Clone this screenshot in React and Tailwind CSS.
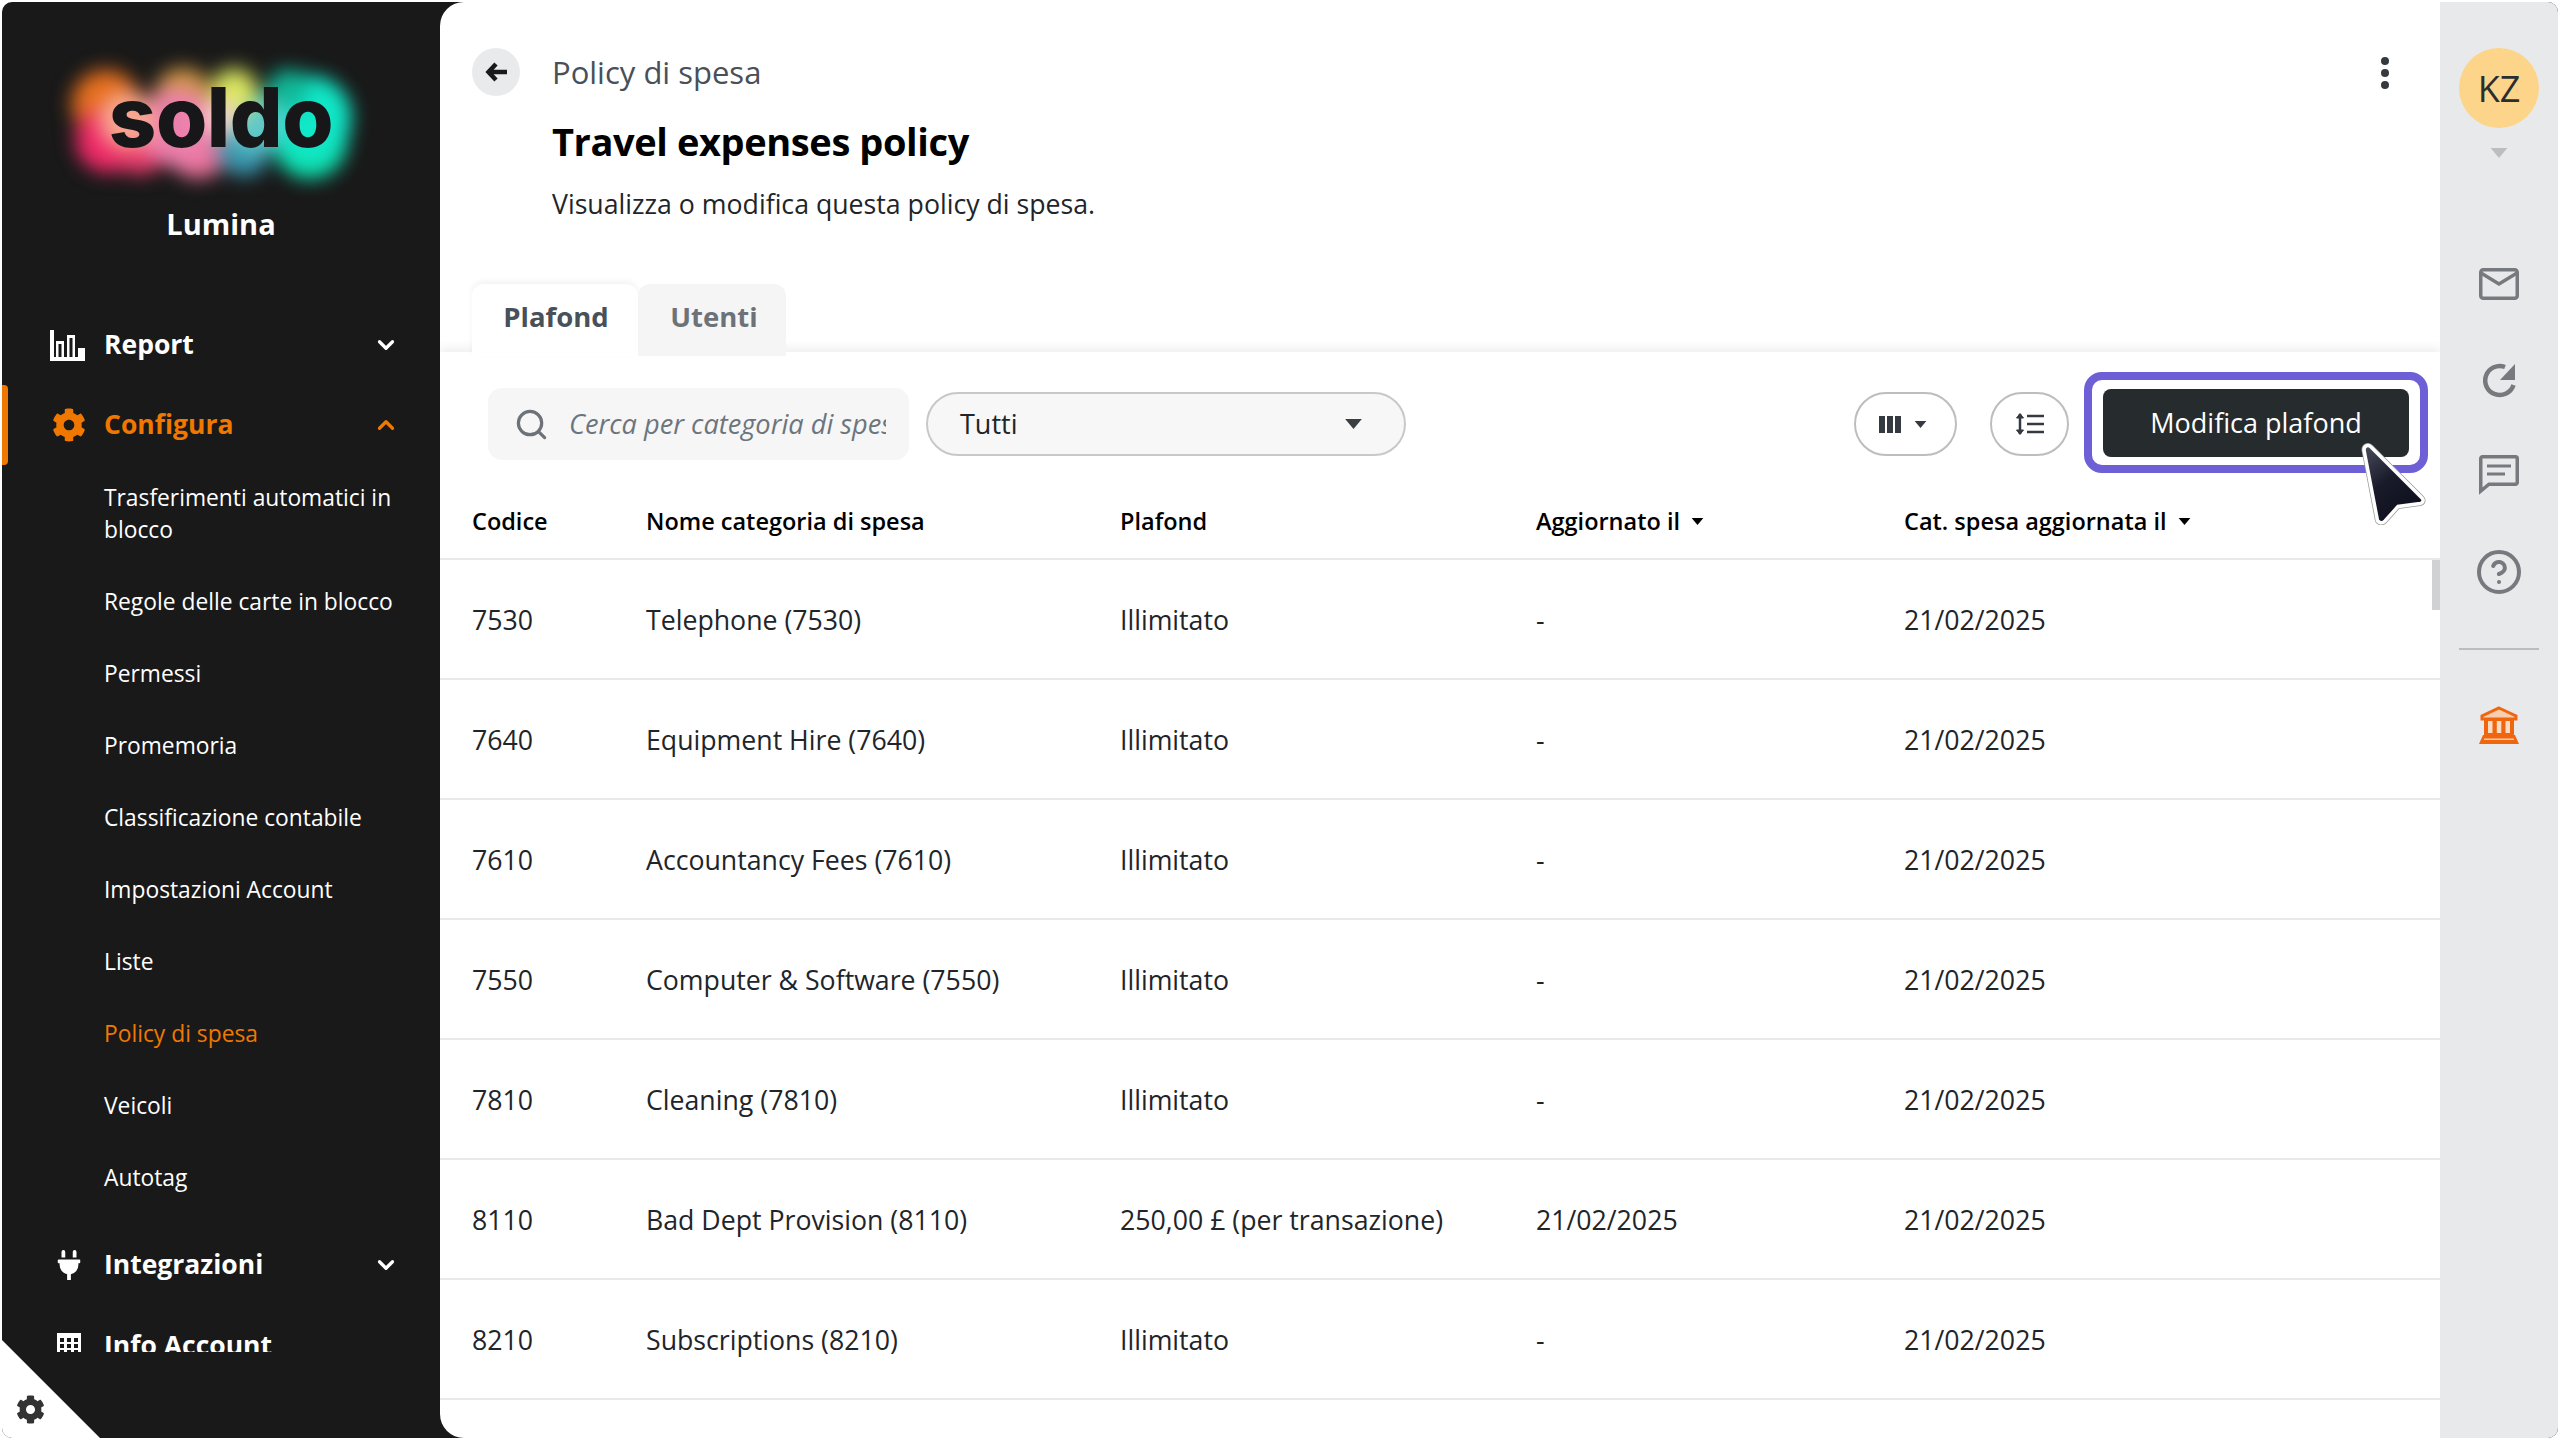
import { ChevronDown, ChevronUp, Search, CircleHelp } from 'lucide-react';
import { FaCog, FaPlug } from 'react-icons/fa';

const subItems = [
  { label: 'Trasferimenti automatici in blocco', two: true },
  { label: 'Regole delle carte in blocco' },
  { label: 'Permessi' },
  { label: 'Promemoria' },
  { label: 'Classificazione contabile' },
  { label: 'Impostazioni Account' },
  { label: 'Liste' },
  { label: 'Policy di spesa', active: true },
  { label: 'Veicoli' },
  { label: 'Autotag' },
];

const rows = [
  ['7530', 'Telephone (7530)', 'Illimitato', '-', '21/02/2025'],
  ['7640', 'Equipment Hire (7640)', 'Illimitato', '-', '21/02/2025'],
  ['7610', 'Accountancy Fees (7610)', 'Illimitato', '-', '21/02/2025'],
  ['7550', 'Computer & Software (7550)', 'Illimitato', '-', '21/02/2025'],
  ['7810', 'Cleaning (7810)', 'Illimitato', '-', '21/02/2025'],
  ['8110', 'Bad Dept Provision (8110)', '250,00 £ (per transazione)', '21/02/2025', '21/02/2025'],
  ['8210', 'Subscriptions (8210)', 'Illimitato', '-', '21/02/2025'],
];

function Caret({ className }) {
  return (
    <svg viewBox="0 0 10 6" className={className} fill="currentColor">
      <path d="M0 0h10L5 6z" />
    </svg>
  );
}

function BarsIcon() {
  return (
    <svg viewBox="0 0 35 31" className="h-[31px] w-[35px]" fill="#fff">
      <path d="M0 0h4v27h31v4H0z" />
      <path d="M6 11h8v16H6zM17 5h8v22h-8zM28 18h7v9h-7z" />
      <path d="M8.500 14h3v13h-3zM19.500 8h3v19h-3z" fill="#191919" />
    </svg>
  );
}

function GridIcon() {
  return (
    <svg viewBox="0 0 24 24" className="h-[24px] w-[24px]" fill="#fff">
      <path
        fillRule="evenodd"
        d="M0 0h24v24H0zM3 5v4h4V5zM10 5v4h4V5zM17 5v4h4V5zM3 11v4h4v-4zM10 11v4h4v-4zM17 11v4h4v-4zM3 17v4h4v-4zM10 17v4h4v-4zM17 17v4h4v-4z"
      />
    </svg>
  );
}

function Logo() {
  return (
    <div className="relative h-[180px] w-full">
      <div className="absolute left-[58px] top-[48px] h-[150px] w-[320px] blur-[9px] bg-[radial-gradient(circle_24px_at_160px_67px,#f8d0c8_50%,transparent),radial-gradient(circle_30px_at_174px_42px,#dce860_55%,transparent),radial-gradient(circle_34px_at_197px_73px,#60c8c8_70%,transparent),radial-gradient(circle_32px_at_184px_100px,#3a98b0_60%,transparent),radial-gradient(circle_34px_at_67px_70px,#f8a890_65%,transparent),radial-gradient(circle_44px_at_117px_77px,#ec80ac_75%,transparent),radial-gradient(circle_34px_at_80px_96px,#ea3a6c_65%,transparent),radial-gradient(circle_36px_at_138px_98px,#e87098_70%,transparent),radial-gradient(circle_34px_at_123px_46px,#d49a48_65%,transparent),radial-gradient(circle_26px_at_228px_40px,#10b898_55%,transparent),radial-gradient(circle_46px_at_250px_67px,#10e8c8_80%,transparent),radial-gradient(circle_42px_at_250px_92px,#10e0b0_75%,transparent),radial-gradient(circle_38px_at_48px_90px,#f02a68_70%,transparent),radial-gradient(circle_40px_at_46px_54px,#e8701f_70%,transparent)]" />
      <div className="absolute left-0 top-[65px] w-full text-center font-['Inter',sans-serif] text-[83px] leading-[100px] font-extrabold tracking-[-0.5px] text-[#17171a]">
        soldo
      </div>
    </div>
  );
}

function Sidebar() {
  return (
    <aside className="relative flex h-full w-[438px] shrink-0 flex-col text-white">
      <Logo />
      <div className="mt-[22px] text-center text-[29px] leading-[40px] font-bold">Lumina</div>
      <nav className="mt-[61px] h-[1047px] overflow-hidden">
        <div className="flex h-[80px] items-center pl-[48px] pr-[41px]">
          <div className="flex w-[54px] justify-start"><BarsIcon /></div>
          <span className="flex-1 text-[26.500px] font-bold">Report</span>
          <ChevronDown size={26} strokeWidth={3} />
        </div>
        <div className="relative flex h-[80px] items-center pl-[50px] pr-[41px] text-[#f07800]">
          <div className="absolute left-0 top-0 h-[80px] w-[6px] rounded-r-[4px] bg-[#f07800]" />
          <div className="flex w-[52px] justify-start"><FaCog size={34} /></div>
          <span className="flex-1 text-[26.500px] font-bold">Configura</span>
          <ChevronUp size={26} strokeWidth={3} />
        </div>
        <ul className="-mt-[3px] pl-[102px] pr-[40px] text-[22.800px] leading-[32px]">
          {subItems.map((item) => (
            <li
              key={item.label}
              className={`flex items-center ${item.two ? 'h-[104px]' : 'h-[72px]'} ${item.active ? 'text-[#f07800]' : ''}`}
            >
              {item.label}
            </li>
          ))}
        </ul>
        <div className="mt-[11px] flex h-[80px] items-center pl-[50px] pr-[41px]">
          <div className="flex w-[52px] justify-start pl-[2px]"><FaPlug size={30} /></div>
          <span className="flex-1 text-[26.500px] font-bold">Integrazioni</span>
          <ChevronDown size={26} strokeWidth={3} />
        </div>
        <div className="flex h-[80px] items-center pl-[50px] pr-[41px]">
          <div className="flex w-[52px] justify-start pl-[5px]"><GridIcon /></div>
          <span className="flex-1 pt-[2px] text-[26.500px] font-bold">Info Account</span>
        </div>
      </nav>
      <div className="absolute bottom-0 left-0 h-[98px] w-[98px] bg-white [clip-path:polygon(0_0,100%_100%,0_100%)]" />
      <FaCog size={29} className="absolute bottom-[14px] left-[14px] text-[#333]" />
    </aside>
  );
}

function Toolbar() {
  return (
    <div className="flex h-[108px] items-start pl-[48px] pr-[12px] pt-[36px]">
      <div className="flex h-[72px] w-[421px] items-center rounded-[14px] bg-[#f6f6f6] pl-[26px] pr-[23px]">
        <Search size={35} strokeWidth={2.200} className="shrink-0 text-[#6c7278]" />
        <span className="ml-[20px] overflow-hidden whitespace-nowrap text-[27.200px] text-[#6c757d] italic">
          Cerca per categoria di spesa
        </span>
      </div>
      <div className="ml-[17px] mt-[4px] flex h-[64px] w-[480px] items-center justify-between rounded-full border-2 border-[#c8c8c8] bg-[#f7f7f7] pl-[32px] pr-[42px] text-[27px] text-[#212529]">
        Tutti
        <Caret className="h-[10px] w-[17px] text-[#3a3f44]" />
      </div>
      <div className="ml-auto mt-[4px] flex h-[64px] w-[103px] items-center justify-center gap-[13px] rounded-full border-2 border-[#bdbdbd] bg-white pr-[5px]">
        <svg viewBox="0 0 22 17" className="h-[17px] w-[22px]" fill="#343a40">
          <path d="M0 0h6v17H0zM8 0h6v17H8zM16 0h6v17h-6z" />
        </svg>
        <Caret className="h-[7px] w-[13px] text-[#343a40]" />
      </div>
      <div className="ml-[33px] mt-[4px] flex h-[64px] w-[79px] items-center justify-center rounded-full border-2 border-[#bdbdbd] bg-white">
        <svg viewBox="0 0 28 24" className="h-[24px] w-[28px]" fill="none" stroke="#343a40" strokeWidth="2.500">
          <path d="M4 2v20" />
          <path d="M0.500 6 4 1.500 7.500 6zM0.500 18 4 22.500 7.500 18z" fill="#343a40" strokeWidth="1" />
          <path d="M11 4h17M11 12h17M11 20h17" />
        </svg>
      </div>
      <div className="relative ml-[15px] -mt-[16px] flex h-[101px] w-[344px] items-center justify-center rounded-[18px] border-[8px] border-[#6f5fd6] bg-white">
        <div className="flex h-[68px] w-[306px] items-center justify-center rounded-[8px] bg-[#262b2e] pt-[2px] text-[27px] text-white">
          Modifica plafond
        </div>
        <svg viewBox="0 0 66 82" className="absolute left-[268px] top-[63px] h-[82px] w-[66px]">
          <defs>
            <linearGradient id="cursorFill" x1="0" y1="0" x2="0.6" y2="1">
              <stop offset="0" stopColor="#4a4d5e" />
              <stop offset="0.5" stopColor="#1a1b2a" />
              <stop offset="1" stopColor="#0e0f1c" />
            </linearGradient>
          </defs>
          <path
            d="M4 7C4 3 8 1 11 4l51 51c2 2 1 5-2 5.500l-22 3-13 14.500c-3 3-8 2-8-3z"
            fill="url(#cursorFill)"
            stroke="#9a9a9a"
            strokeWidth="5"
          />
          <path
            d="M4 7C4 3 8 1 11 4l51 51c2 2 1 5-2 5.500l-22 3-13 14.500c-3 3-8 2-8-3z"
            fill="url(#cursorFill)"
            stroke="#fff"
            strokeWidth="3.500"
          />
        </svg>
      </div>
    </div>
  );
}

function PolicyTable() {
  return (
    <div className="text-[26.700px] text-[#212529]">
      <div className="grid h-[100px] grid-cols-[174px_474px_416px_368px_1fr] items-end border-b-2 border-[#e9e9e9] pb-[19px] pl-[32px] text-[23.500px] leading-[36px] font-semibold text-black">
        <div>Codice</div>
        <div>Nome categoria di spesa</div>
        <div>Plafond</div>
        <div className="flex items-center gap-[10px]">
          Aggiornato il <Caret className="h-[7px] w-[15px]" />
        </div>
        <div className="flex items-center gap-[10px]">
          Cat. spesa aggiornata il <Caret className="h-[7px] w-[15px]" />
        </div>
      </div>
      {rows.map((row) => (
        <div
          key={row[0]}
          className="grid h-[120px] grid-cols-[174px_474px_416px_368px_1fr] items-center border-b-2 border-[#e9e9e9] pl-[32px] pt-[2px]"
        >
          {row.map((cell, i) => (
            <div key={i}>{cell}</div>
          ))}
        </div>
      ))}
    </div>
  );
}

function Main() {
  return (
    <main className="relative h-full min-w-0 flex-1 overflow-hidden rounded-l-[24px] bg-white">
      <div className="h-[350px] pl-[32px] pt-[46px]">
        <div className="flex h-[48px] items-center">
          <button className="flex h-[48px] w-[48px] items-center justify-center rounded-full bg-[#e9eaec]">
            <svg viewBox="0 0 22 20" className="h-[20px] w-[22px]" fill="none" stroke="#17191b" strokeWidth="4.500">
              <path d="M11 2 3.500 10l7.500 8M4 10h18" />
            </svg>
          </button>
          <span className="ml-[32px] text-[31px] text-[#495057]">Policy di spesa</span>
        </div>
        <h1 className="ml-[80px] mt-[19px] text-[38px] leading-[52px] font-bold tracking-[-0.4px] text-black">Travel expenses policy</h1>
        <p className="ml-[80px] mt-[17px] text-[26.700px] leading-[40px] text-[#212529]">
          Visualizza o modifica questa policy di spesa.
        </p>
        <div className="relative z-10 mt-[60px] flex h-[72px] text-[27.500px] font-bold">
          <div className="flex w-[166px] items-center justify-center rounded-t-[12px] bg-white pb-[7px] pl-[2px] text-[#495057] shadow-[0_-3px_6px_rgba(0,0,0,0.05)]">
            Plafond
          </div>
          <div className="flex w-[148px] items-center justify-center rounded-t-[12px] bg-[#f5f5f5] pb-[7px] pl-[4px] text-[#6c7278]">
            Utenti
          </div>
        </div>
      </div>
      <div className="bg-white shadow-[0_-5px_8px_rgba(0,0,0,0.06)]">
        <Toolbar />
        <PolicyTable />
      </div>
      <div className="absolute right-0 top-[558px] h-[50px] w-[8px] bg-[#d0d1d3]" />
      <div className="absolute right-[51px] top-[55px] flex flex-col gap-[4px]">
        <div className="h-[8px] w-[8px] rounded-full bg-[#343a40]" />
        <div className="h-[8px] w-[8px] rounded-full bg-[#343a40]" />
        <div className="h-[8px] w-[8px] rounded-full bg-[#343a40]" />
      </div>
    </main>
  );
}

function Rail() {
  return (
    <aside className="flex h-full w-[118px] shrink-0 flex-col items-center bg-[#e8e9eb] pt-[46px]">
      <div className="flex h-[80px] w-[80px] items-center justify-center rounded-full bg-[#fdd58a] pt-[2px] text-[36px] font-medium text-[#2a2e30]">
        KZ
      </div>
      <Caret className="mt-[20px] h-[10px] w-[20px] text-[#bcbdc0]" />
      <svg viewBox="0 0 40 32" className="mt-[110px] h-[32px] w-[40px]" fill="none" stroke="#767a7e" strokeWidth="3.500">
        <rect x="1.750" y="1.750" width="36.500" height="28.500" rx="2.500" />
        <path d="M2 5l18 11L38 5" />
      </svg>
      <svg viewBox="25 12 35 36" className="ml-[2px] mt-[62px] h-[36px] w-[35px]" fill="none" stroke="#767a7e" strokeWidth="4.500">
        <path d="M55.500 35A14.500 14.500 0 1 1 47 17" />
        <path d="M57 14v16H42z" fill="#767a7e" stroke="none" />
      </svg>
      <svg viewBox="0 0 40 40" className="mt-[57px] h-[40px] w-[40px]" fill="none" stroke="#767a7e" strokeWidth="3.500">
        <path d="M3.500 1.750h33a1.750 1.750 0 0 1 1.750 1.750v24a1.750 1.750 0 0 1-1.750 1.750H10L1.750 36V3.500a1.750 1.750 0 0 1 1.750-1.750z" />
        <path d="M8 11h24M8 19h18" strokeWidth="3" />
      </svg>
      <CircleHelp size={48} strokeWidth={2} className="mt-[53px] text-[#767a7e]" />
      <div className="mt-[52px] h-[2px] w-[80px] bg-[#bcbdc0]" />
      <svg viewBox="0 0 40 38" className="mt-[56px] h-[38px] w-[40px]">
        <path d="M20 2 37 10v3H3v-3z" fill="#f8cfae" stroke="#f0660f" strokeWidth="3" />
        <path d="M5 13h30v16H5z" fill="#f0660f" />
        <path d="M9 15h4.500v12H9zM17.800 15h4.500v12h-4.500zM26.500 15H31v12h-4.500z" fill="#f8dcc6" />
        <path d="M4 29h32l4 9H0z" fill="#f0660f" />
        <path d="M5 32.500h30v1.500H5z" fill="#f8cfae" />
      </svg>
    </aside>
  );
}

export default function App() {
  return (
    <div className="h-[1440px] w-[2560px] bg-white p-[2px] font-['Open_Sans',sans-serif]">
      <div className="flex h-full overflow-hidden rounded-[10px] bg-[#191919]">
        <Sidebar />
        <Main />
        <Rail />
      </div>
    </div>
  );
}
